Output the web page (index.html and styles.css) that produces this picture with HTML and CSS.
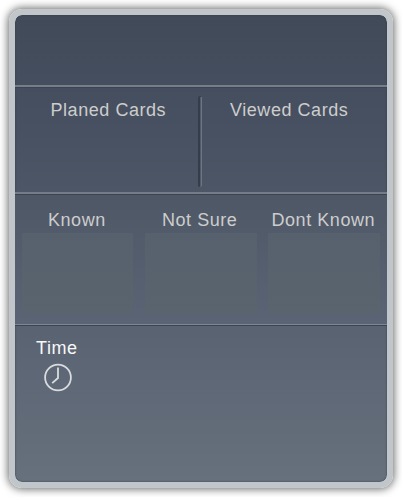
FILE: index.html
```html
<!DOCTYPE html>
<html lang="en">
<head>
<meta charset="utf-8">
<title>Card statistics</title>
<link rel="stylesheet" href="styles.css">
</head>
<body>
<main class="panel">
  <header class="top"></header>
  <section class="totals">
    <h2 class="label planned">Planed Cards</h2>
    <div class="divider"></div>
    <h2 class="label viewed">Viewed Cards</h2>
  </section>
  <section class="answers">
    <div class="answer"><h2 class="label known">Known</h2><div class="box"></div></div>
    <div class="answer"><h2 class="label unsure">Not Sure</h2><div class="box"></div></div>
    <div class="answer"><h2 class="label unknown">Dont Known</h2><div class="box"></div></div>
  </section>
  <section class="timer">
    <h2 class="label time">Time</h2>
    <svg class="clock" viewBox="0 0 30 30" fill="none" stroke="#d9dcdf" stroke-width="1.8">
      <circle cx="15" cy="14.5" r="12.9"/>
      <path d="M15 4.5V15L9.2 20.2"/>
    </svg>
  </section>
</main>
</body>
</html>
```
FILE: styles.css
```css
* { box-sizing: border-box; }
body {
  margin: 0;
  padding: 9px;
  height: 497px;
  overflow: hidden;
  background: #fff;
  font-family: "Liberation Sans", Arial, sans-serif;
}
.panel {
  width: 384px;
  height: 479px;
  border: 6px solid #c1c6ca;
  border-radius: 13px;
  background: linear-gradient(#414a59, #485161 25%, #505a69 48%, #5a6473 70%, #67717d) padding-box;
  box-shadow: 0 0 9px 1px rgba(0, 0, 0, .6), inset 0 0 2px #323b49;
  display: flex;
  flex-direction: column;
}
.top { height: 70px; }
.totals, .answers, .timer {
  border-top: 2px solid #757d89;
  box-shadow: inset 0 1px #3c4454;
}
.totals {
  height: 107px;
  display: grid;
  grid-template-columns: 183px 5px 1fr;
  padding-top: 9px;
}
.label {
  margin: 0;
  font-size: 18px;
  line-height: 20px;
  font-weight: 400;
  letter-spacing: .55px;
  color: #cdcdcd;
  white-space: nowrap;
}
.planned { padding: 4px 0 0 35.5px; }
.viewed { padding: 4px 0 0 27px; }
.divider {
  width: 4px;
  height: 91px;
  border: solid #343d4b;
  border-width: 1px 0 0 2px;
  border-right: 1px solid #6c7581;
  border-radius: 2px;
  background: #515b69;
}
.answers {
  height: 132px;
  padding: 16px 7px 0;
  display: grid;
  grid-template-columns: 111px 112px 112px;
  column-gap: 11.5px;
  background: linear-gradient(#4e5766, #5a6474);
}
.known { padding-left: 26px; }
.unsure { padding-left: 17.5px; }
.unknown { padding-left: 3.5px; }
.box {
  height: 80px;
  margin-top: 3px;
  background: linear-gradient(#57616d, #59646f);
}
.timer {
  flex: 1;
  border-top: 1px solid #7d8691;
  padding: 13px 0 0 21px;
}
.time { color: #f8f8f8; }
.clock {
  display: block;
  width: 30px;
  height: 30px;
  margin: 5px 0 0 7px;
}
```
